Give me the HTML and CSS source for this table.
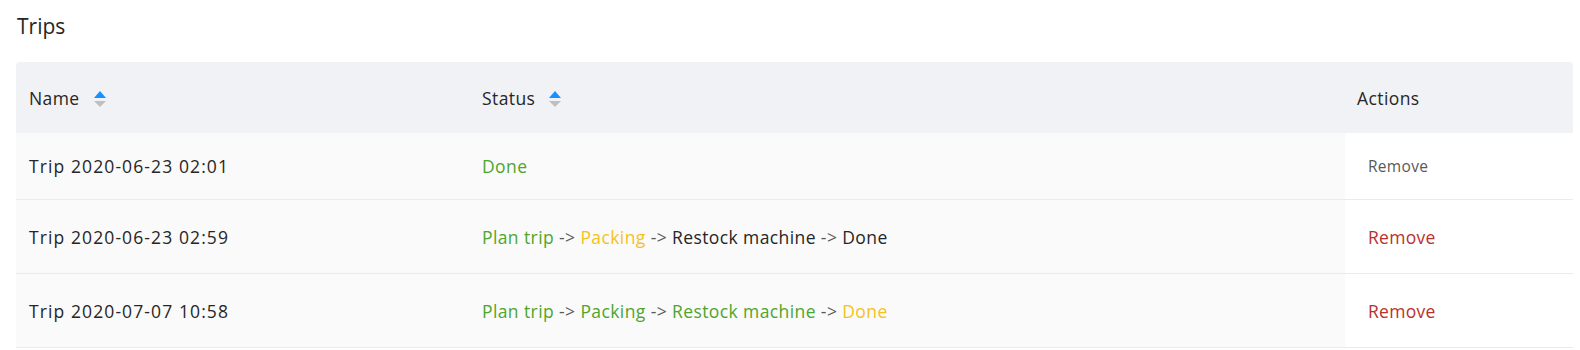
FILE: index.html
```html
<!DOCTYPE html>
<html>
<head>
<meta charset="utf-8">
<link rel="stylesheet" href="styles.css">
</head>
<body>
<div class="page">
  <h1 class="title">Trips</h1>
  <table class="trips">
    <colgroup>
      <col class="col-name">
      <col class="col-status">
      <col class="col-actions">
    </colgroup>
    <thead>
      <tr>
        <th class="th-name"><span class="th-inner">Name <span class="sorter"><span class="up"></span><span class="down"></span></span></span></th>
        <th class="th-status"><span class="th-inner">Status <span class="sorter"><span class="up"></span><span class="down"></span></span></span></th>
        <th class="th-actions">Actions</th>
      </tr>
    </thead>
    <tbody>
      <tr>
        <td class="td-name">Trip 2020-06-23 02:01</td>
        <td class="td-status"><span class="ok">Done</span></td>
        <td class="td-actions"><button class="btn btn-small">Remove</button></td>
      </tr>
      <tr>
        <td class="td-name">Trip 2020-06-23 02:59</td>
        <td class="td-status"><span class="ok">Plan trip</span> <span class="arrow">-&gt;</span> <span class="cur">Packing</span> <span class="arrow">-&gt;</span> <span class="todo">Restock machine</span> <span class="arrow">-&gt;</span> <span class="todo">Done</span></td>
        <td class="td-actions"><button class="btn btn-danger">Remove</button></td>
      </tr>
      <tr>
        <td class="td-name">Trip 2020-07-07 10:58</td>
        <td class="td-status"><span class="ok">Plan trip</span> <span class="arrow">-&gt;</span> <span class="ok">Packing</span> <span class="arrow">-&gt;</span> <span class="ok">Restock machine</span> <span class="arrow">-&gt;</span> <span class="cur">Done</span></td>
        <td class="td-actions"><button class="btn btn-danger">Remove</button></td>
      </tr>
    </tbody>
  </table>
</div>
</body>
</html>
```
FILE: styles.css
```css
html, body {
  margin: 0;
  padding: 0;
  background: #fff;
}
body {
  font-family: "Open Sans", "Noto Sans", sans-serif;
  color: #262626;
}
.page {
  padding: 0 7px 0 16px;
}
.title {
  margin: 0;
  padding: 11px 0 0 1px;
  height: 62px;
  box-sizing: border-box;
  font-size: 21px;
  font-weight: 400;
  line-height: 30px;
  color: #262626;
}
.trips {
  width: 100%;
  border-collapse: collapse;
  table-layout: fixed;
  font-size: 17.5px;
  letter-spacing: 0.4px;
}
.col-name { width: 450px; }
.col-actions { width: 228px; }
.trips th {
  background: #f1f2f6;
  font-weight: 400;
  text-align: left;
  height: 71px;
  padding: 0;
  color: #262626;
  vertical-align: middle;
}
.th-name { padding-left: 13px !important; border-top-left-radius: 4px; }
.th-status { padding-left: 16px !important; }
.th-actions { padding-left: 12px !important; border-top-right-radius: 4px; }
.th-inner {
  display: inline-flex;
  align-items: center;
  gap: 14px;
}
.sorter {
  display: inline-flex;
  flex-direction: column;
  gap: 3px;
  margin-top: 3px;
}
.sorter .up {
  width: 0;
  height: 0;
  border-left: 6px solid transparent;
  border-right: 6px solid transparent;
  border-bottom: 7px solid #1890ff;
}
.sorter .down {
  width: 0;
  height: 0;
  border-left: 6px solid transparent;
  border-right: 6px solid transparent;
  border-top: 6px solid #bfbfbf;
}
.trips td {
  background: #fafafa;
  border-bottom: 1px solid #ebebeb;
  padding: 16px 16px;
  vertical-align: middle;
}
.trips td.td-name {
  padding-left: 13px;
  letter-spacing: 1.1px;
}
.trips td.td-actions {
  background: #fff;
  padding-left: 20px;
}
.ok { color: #4ea52c; }
.cur { color: #f5c11a; }
.todo { color: #262626; }
.arrow { color: #595959; }
.btn {
  font-family: inherit;
  letter-spacing: 0.3px;
  background: transparent;
  border: 0;
  padding: 0 3px;
  cursor: pointer;
}
.btn-small {
  font-size: 15.5px;
  color: #595959;
  height: 34px;
}
.btn-danger {
  font-size: 17.5px;
  color: #b8312f;
  height: 41px;
}
```
